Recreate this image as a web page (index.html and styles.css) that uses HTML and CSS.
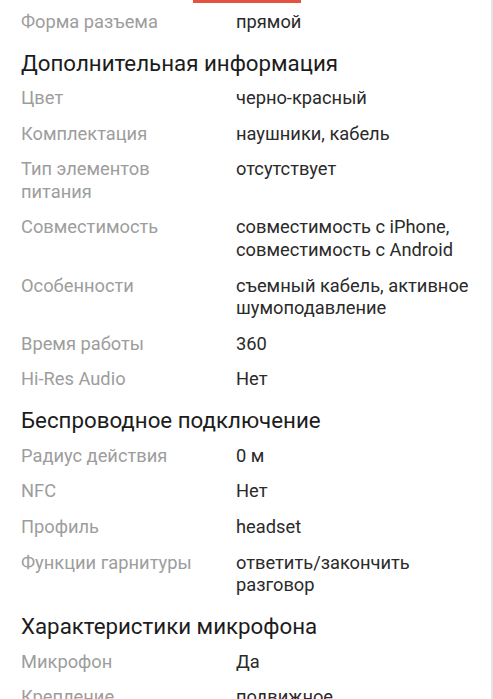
FILE: index.html
```html
<!DOCTYPE html>
<html lang="ru">
<head>
<meta charset="utf-8">
<link rel="stylesheet" href="styles.css">
</head>
<body>
<div class="page">
  <div class="tab-indicator"></div>
  <div class="specs">
    <div class="row"><div class="label">Форма разъема</div><div class="value">прямой</div></div>

    <h2 class="group">Дополнительная информация</h2>
    <div class="row"><div class="label">Цвет</div><div class="value">черно-красный</div></div>
    <div class="row"><div class="label">Комплектация</div><div class="value">наушники, кабель</div></div>
    <div class="row"><div class="label">Тип элементов питания</div><div class="value">отсутствует</div></div>
    <div class="row"><div class="label">Совместимость</div><div class="value">совместимость с iPhone, совместимость с Android</div></div>
    <div class="row"><div class="label">Особенности</div><div class="value">съемный кабель, активное шумоподавление</div></div>
    <div class="row"><div class="label">Время работы</div><div class="value">360</div></div>
    <div class="row"><div class="label">Hi-Res Audio</div><div class="value">Нет</div></div>

    <h2 class="group">Беспроводное подключение</h2>
    <div class="row"><div class="label">Радиус действия</div><div class="value">0 м</div></div>
    <div class="row"><div class="label">NFC</div><div class="value">Нет</div></div>
    <div class="row"><div class="label">Профиль</div><div class="value">headset</div></div>
    <div class="row"><div class="label">Функции гарнитуры</div><div class="value">ответить/закончить разговор</div></div>

    <h2 class="group">Характеристики микрофона</h2>
    <div class="row"><div class="label">Микрофон</div><div class="value">Да</div></div>
    <div class="row"><div class="label">Крепление</div><div class="value">подвижное</div></div>
  </div>
  <div class="scrollbar"></div>
</div>
</body>
</html>
```
FILE: styles.css
```css
html, body {
  margin: 0;
  padding: 0;
  background: #ffffff;
}
body {
  font-family: Roboto, "Noto Sans", sans-serif;
  overflow: hidden;
}
.page {
  position: relative;
  width: 493px;
  height: 699px;
  overflow: hidden;
}
.tab-indicator {
  position: absolute;
  top: 0;
  left: 193px;
  width: 108px;
  height: 3px;
  background: #e2543f;
}
.scrollbar {
  position: absolute;
  top: 0;
  right: 0;
  width: 2px;
  height: 100%;
  background: #e3e3e3;
}
.specs {
  padding: 4px 14px 0 21px;
}
.row {
  display: grid;
  grid-template-columns: 215px 1fr;
  padding: 6.55px 0;
  font-size: 18.3px;
  line-height: 22.5px;
}
.label {
  color: #9d9d9d;
  padding-right: 20px;
}
.value {
  color: #2a2a2a;
}
.group {
  margin: 9px 0 4px;
  font-size: 22.3px;
  font-weight: 400;
  line-height: 28px;
  color: #1c1c1c;
}
```
